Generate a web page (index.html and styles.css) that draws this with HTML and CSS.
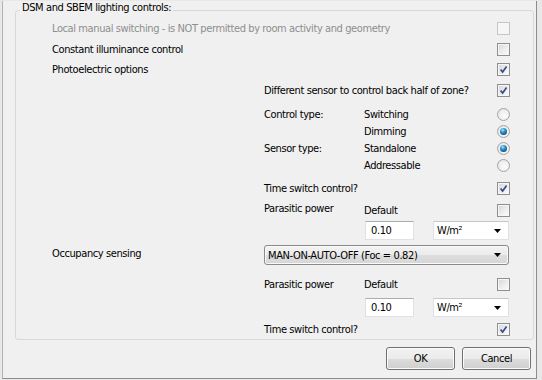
FILE: index.html
```html
<!DOCTYPE html>
<html lang="en">
<head>
    <meta charset="UTF-8">
    <title>Lighting controls</title>
    <link rel="stylesheet" href="styles.css">
</head>
<body>
    <div class="dialog">
        <fieldset class="group">
            <legend>DSM and SBEM lighting controls:</legend>

            <div class="row r1">
                <span class="c-wide disabled">Local manual switching - is NOT permitted by room activity and geometry</span>
                <span class="check is-disabled"></span>
            </div>
            <div class="row r2">
                <span class="c1">Constant illuminance control</span>
                <span class="check"></span>
            </div>
            <div class="row r3">
                <span class="c1">Photoelectric options</span>
                <span class="check is-checked"><svg viewBox="0 0 11 11"><path d="M2.6 5.4 L4.6 8 L8.6 2.4"/></svg></span>
            </div>
            <div class="row r4">
                <span class="c2-wide">Different sensor to control back half of zone?</span>
                <span class="check is-checked"><svg viewBox="0 0 11 11"><path d="M2.6 5.4 L4.6 8 L8.6 2.4"/></svg></span>
            </div>

            <!-- control / sensor type radios -->
            <div class="row r5 radio-row">
                <span class="c2">Control type:</span>
                <span class="c3">Switching</span>
                <span class="radio"></span>
            </div>
            <div class="row radio-row">
                <span class="c3">Dimming</span>
                <span class="radio is-on"></span>
            </div>
            <div class="row radio-row">
                <span class="c2">Sensor type:</span>
                <span class="c3">Standalone</span>
                <span class="radio is-on"></span>
            </div>
            <div class="row radio-row">
                <span class="c3">Addressable</span>
                <span class="radio"></span>
            </div>

            <div class="row r9">
                <span class="c2-wide">Time switch control?</span>
                <span class="check is-checked"><svg viewBox="0 0 11 11"><path d="M2.6 5.4 L4.6 8 L8.6 2.4"/></svg></span>
            </div>
            <div class="row r10">
                <span class="c2 lift">Parasitic power</span>
                <span class="c3">Default</span>
                <span class="check"></span>
            </div>
            <div class="row r11">
                <input class="c3 field" value="0.10">
                <div class="combo unit"><span>W/m²</span><svg class="arrow" viewBox="0 0 7 4"><polygon points="0,0 7,0 3.5,4"/></svg></div>
            </div>

            <div class="row r12">
                <span class="c1 lift">Occupancy sensing</span>
                <div class="combo list"><span>MAN-ON-AUTO-OFF (Foc = 0.82)</span><svg class="arrow" viewBox="0 0 7 4"><polygon points="0,0 7,0 3.5,4"/></svg></div>
            </div>
            <div class="row r13">
                <span class="c2">Parasitic power</span>
                <span class="c3">Default</span>
                <span class="check"></span>
            </div>
            <div class="row r14">
                <input class="c3 field" value="0.10">
                <div class="combo unit"><span>W/m²</span><svg class="arrow" viewBox="0 0 7 4"><polygon points="0,0 7,0 3.5,4"/></svg></div>
            </div>
            <div class="row r15">
                <span class="c2-wide">Time switch control?</span>
                <span class="check is-checked"><svg viewBox="0 0 11 11"><path d="M2.6 5.4 L4.6 8 L8.6 2.4"/></svg></span>
            </div>
        </fieldset>

        <div class="actions">
            <button class="btn">OK</button>
            <button class="btn">Cancel</button>
        </div>
    </div>
</body>
</html>
```

FILE: styles.css
```css
body {
    margin: 0;
    background-color: #e8e8e8;
    font: 11px "DejaVu Sans Condensed", "DejaVu Sans", sans-serif;
    letter-spacing: -0.4px;
    color: #000;
}
.dialog {
    box-sizing: border-box;
    width: 535px;
    height: 378px;
    margin-left: 2px;
    background-color: #f0f0f0;
    border-left: 1px solid #b2b2b2;
    border-right: 1px solid #8c8c8c;
    border-bottom: 1px solid #8c8c8c;
}

/* group box */
.group {
    margin: 1px 2px 0 12px;
    padding: 0;
    border: 1px solid #d5d9dd;
    border-radius: 3px;
}
.group legend {
    margin-left: 4px;
    padding: 0 2px 6px;
    line-height: 13px;
}

/* every row shares the same five columns */
.row {
    display: grid;
    grid-template-columns: 212px 100px 69px 64px 13px;
    align-items: center;
    margin: 0 21px 0 36px;
    white-space: nowrap;
}
.row > * { grid-row: 1; }
.c1 { grid-column: 1; }
.c2 { grid-column: 2; }
.c3 { grid-column: 3 / 5; }
.c-wide { grid-column: 1 / 5; }
.c2-wide { grid-column: 2 / 5; }
.lift { margin-top: -3px; }
.disabled { color: #8e8e8e; }

.r1 { height: 16px; }
.r2 { height: 21px; margin-top: 3px; }
.r3 { height: 19px; }
.r4 { height: 21px; margin-top: 1px; }
.r5 { margin-top: 5px; }
.radio-row { height: 17px; }
.r9 { height: 22px; margin-top: 3px; }
.r10 { height: 22px; }
.r11 { height: 19px; }
.r12 { height: 22px; margin-top: 4px; }
.r13 { height: 23px; margin-top: 7px; }
.r14 { height: 19px; margin-top: 2px; }
.r15 { height: 19px; margin-top: 3px; }

/* checkboxes */
.check {
    grid-column: 5;
    box-sizing: border-box;
    width: 13px;
    height: 13px;
    border: 1px solid #8f8f8f;
    background: linear-gradient(135deg, #d3d5d9 0%, #eeeeee 55%, #fbfbfb 100%);
    box-shadow: inset 0 0 0 1px #f6f6f6;
}
.check.is-disabled {
    border-color: #c6c6c6;
    background: #f6f6f6;
    box-shadow: none;
}
.check svg {
    display: block;
    width: 11px;
    height: 11px;
}
.check path {
    fill: none;
    stroke: #3a4c8a;
    stroke-width: 1.7;
}

/* radios */
.radio {
    grid-column: 5;
    box-sizing: border-box;
    width: 13px;
    height: 13px;
    border-radius: 50%;
    border: 1px solid #a4a4a4;
    background: radial-gradient(circle at 60% 60%, #fdfdfd 0%, #ececec 60%, #d9d9d9 100%);
    display: grid;
    place-items: center;
}
.radio.is-on::after {
    content: "";
    width: 7px;
    height: 7px;
    border-radius: 50%;
    background: radial-gradient(circle at 40% 30%, #b8e6ff 0%, #3a9fd6 30%, #0f5c93 70%, #083457 100%);
}

/* text fields and combos */
.field {
    box-sizing: border-box;
    width: 49px;
    height: 19px;
    margin: 0 0 0 1px;
    padding: 0 5px;
    justify-self: start;
    border: 1px solid #dfe1e7;
    border-top-color: #abadb3;
    background-color: #fff;
    font: inherit;
    letter-spacing: inherit;
    color: #000;
}
.combo {
    box-sizing: border-box;
    display: flex;
    align-items: center;
    justify-content: space-between;
    justify-self: start;
}
.combo .arrow {
    width: 7px;
    height: 4px;
    fill: #000;
}
.unit {
    grid-column: 4 / 6;
    width: 76px;
    height: 19px;
    padding: 0 7px 0 3px;
    background-color: #fff;
    border: 1px solid #dfe1e7;
    border-top-color: #c5c7cd;
}
.list {
    grid-column: 2 / 6;
    width: 245px;
    height: 20px;
    padding: 0 7px 0 3px;
    border: 1px solid #8a8a8a;
    border-radius: 3px;
    background: linear-gradient(#f3f3f3 0%, #ebebeb 50%, #dedede 51%, #d6d6d6 100%);
    box-shadow: inset 0 0 0 1px #fafafa;
}

/* buttons */
.actions {
    display: flex;
    justify-content: flex-end;
    gap: 7px;
    margin-top: 7px;
    padding-right: 5px;
}
.btn {
    width: 69px;
    height: 23px;
    padding: 0;
    border: 1px solid #707070;
    border-radius: 3px;
    background: linear-gradient(#f2f2f2 0%, #ebebeb 50%, #dddddd 51%, #cfcfcf 100%);
    box-shadow: inset 0 0 0 1px #fbfbfb;
    font: inherit;
    letter-spacing: inherit;
    color: #000;
}
```
